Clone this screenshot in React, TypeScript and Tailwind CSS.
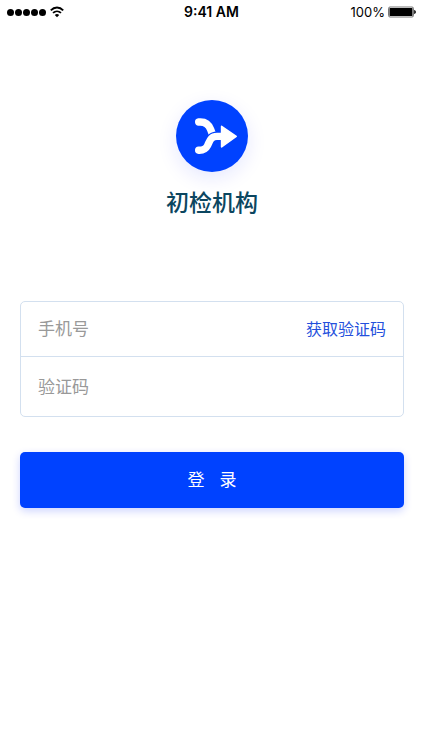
function StatusBar() {
  return (
    <header className="grid h-6 grid-cols-3 items-center pr-1.5 pl-[7px] text-[13px] leading-4 text-black">
      <div className="flex items-center gap-1">
        <div className="flex gap-px">
          {[1, 2, 3, 4, 5].map((dot) => (
            <span key={dot} className="h-[7px] w-[7px] rounded-full bg-black" />
          ))}
        </div>
        <svg viewBox="0 0 16 12" className="h-3 w-4" fill="none" aria-hidden="true">
          <path d="M0.8 4.4C4.4 0.6 9.6 0.6 13.2 4.4" stroke="#000" strokeWidth="1.9" />
          <path d="M3 6.9C5.3 4.8 8.7 4.8 11 6.9" stroke="#000" strokeWidth="1.8" />
          <path d="M4.8 8.9C6.1 7.8 7.9 7.8 9.2 8.9L7 11.2Z" fill="#000" />
        </svg>
      </div>
      <span className="text-center text-[14px] font-semibold">9:41 AM</span>
      <div className="flex items-center justify-end gap-[3px]">
        <span>100%</span>
        <svg viewBox="0 0 28 12" className="h-3 w-7" aria-hidden="true">
          <rect x="0.5" y="1" width="25" height="10" rx="1.5" fill="#fff" stroke="#555" strokeWidth="0.8" />
          <rect x="1.5" y="2" width="23" height="8" rx="0.6" fill="#000" />
          <path d="M26.2 4C28.4 4.4 28.4 7.6 26.2 8Z" fill="#000" />
        </svg>
      </div>
    </header>
  );
}

function Logo() {
  return (
    <div className="h-[72px] w-[72px] rounded-full bg-[#0042ff] shadow-[0_6px_20px_rgba(0,30,255,0.1)]">
      <svg viewBox="0 0 72 72" className="h-full w-full" fill="none" aria-hidden="true">
        {/* upper branch */}
        <path d="M22.7 22C29 21.4 32.6 24 34.6 29.4L36.6 34.6" stroke="#fff" strokeWidth="7.4" strokeLinecap="round" />
        {/* lower branch, cut out from the upper one */}
        <path d="M31 46C33.6 42 34 36.6 41 36.4H46" stroke="#0042ff" strokeWidth="9.6" />
        <path d="M22.7 50.2C27.5 50.4 30 48.8 31.6 45.5C33.8 41 34.5 36.4 41 36.4H47" stroke="#fff" strokeWidth="7.4" strokeLinecap="round" />
        <path d="M45.6 26.4L60.2 36.4L45.6 46.8Z" fill="#fff" stroke="#fff" strokeWidth="1.6" strokeLinejoin="round" />
      </svg>
    </div>
  );
}

export default function App() {
  return (
    <div className="min-h-screen bg-white font-['Inter','Noto_Sans_CJK_SC',sans-serif]">
      <StatusBar />

      <main className="pt-[76px] pr-[18px] pl-5">
        <div className="flex flex-col items-center gap-[13px]">
          <Logo />
          <h1 className="text-[23px] font-medium leading-9 text-[#0b4660]">初检机构</h1>
        </div>

        <form className="mt-20" onSubmit={(e) => e.preventDefault()}>
          <div className="rounded-[5px] border border-[#d3e0ef]">
            <div className="flex h-[55px] items-center border-b border-[#d3e0ef] px-[17px]">
              <input
                type="tel"
                aria-label="手机号"
                placeholder="手机号"
                className="min-w-0 flex-1 text-[17px] leading-6 outline-none placeholder:text-[#999999]"
              />
              <button type="button" className="text-[16px] leading-6 text-[#2450dc]">
                获取验证码
              </button>
            </div>
            <div className="flex h-[59px] items-center px-[17px]">
              <input
                type="text"
                aria-label="验证码"
                placeholder="验证码"
                className="min-w-0 flex-1 text-[17px] leading-6 outline-none placeholder:text-[#999999]"
              />
            </div>
          </div>

          <button
            type="submit"
            className="mt-[35px] flex h-14 w-full items-center justify-center gap-[15px] rounded-[5px] bg-[#0042ff] text-[17px] leading-6 text-white shadow-[0_3px_8px_rgba(0,40,255,0.2)]"
          >
            <span>登</span>
            <span>录</span>
          </button>
        </form>
      </main>
    </div>
  );
}
